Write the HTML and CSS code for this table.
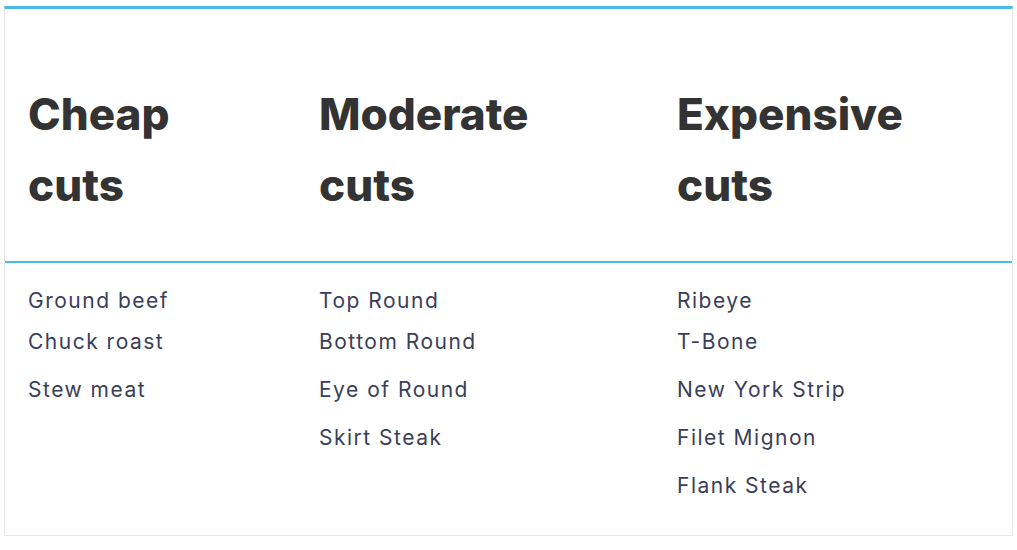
FILE: index.html
```html
<!DOCTYPE html>
<html>
<head>
<meta charset="utf-8">
<link rel="stylesheet" href="styles.css">
</head>
<body>
<div class="table">
  <div class="head">
    <div class="col c1"><h2>Cheap<br>cuts</h2></div>
    <div class="col c2"><h2>Moderate<br>cuts</h2></div>
    <div class="col c3"><h2>Expensive<br>cuts</h2></div>
  </div>
  <div class="body">
    <div class="col c1">
      <p class="first">Ground beef</p>
      <p>Chuck roast</p>
      <p>Stew meat</p>
    </div>
    <div class="col c2">
      <p class="first">Top Round</p>
      <p>Bottom Round</p>
      <p>Eye of Round</p>
      <p>Skirt Steak</p>
    </div>
    <div class="col c3">
      <p class="first">Ribeye</p>
      <p>T-Bone</p>
      <p>New York Strip</p>
      <p>Filet Mignon</p>
      <p>Flank Steak</p>
    </div>
  </div>
</div>
</body>
</html>
```
FILE: styles.css
```css
html, body {
  margin: 0;
  padding: 0;
  background: #fff;
}
body {
  padding: 6px 4px 0 4px;
}
.table {
  width: 1009px;
  box-sizing: border-box;
  border: 1px solid #e6e6e6;
  border-top: 3px solid #4cb9e7;
  height: 530px;
}
.head, .body {
  display: grid;
  grid-template-columns: 291px 358px 1fr;
}
.head {
  height: 254px;
  border-bottom: 2px solid #4cb9e7;
  box-sizing: border-box;
}
.col {
  padding-left: 23px;
}
h2 {
  margin: 0;
  padding-top: 70px;
  font-family: Inter, "Liberation Sans", sans-serif;
  font-weight: 800;
  font-size: 44px;
  line-height: 71px;
  letter-spacing: 0;
  color: #333333;
}
.body .col {
  padding-top: 21px;
}
p {
  margin: 0;
  font-family: Inter, "Liberation Sans", sans-serif;
  font-size: 21px;
  line-height: 48px;
  letter-spacing: 1.5px;
  color: #393e5a;
}
p.first {
  line-height: 34px;
}
```
